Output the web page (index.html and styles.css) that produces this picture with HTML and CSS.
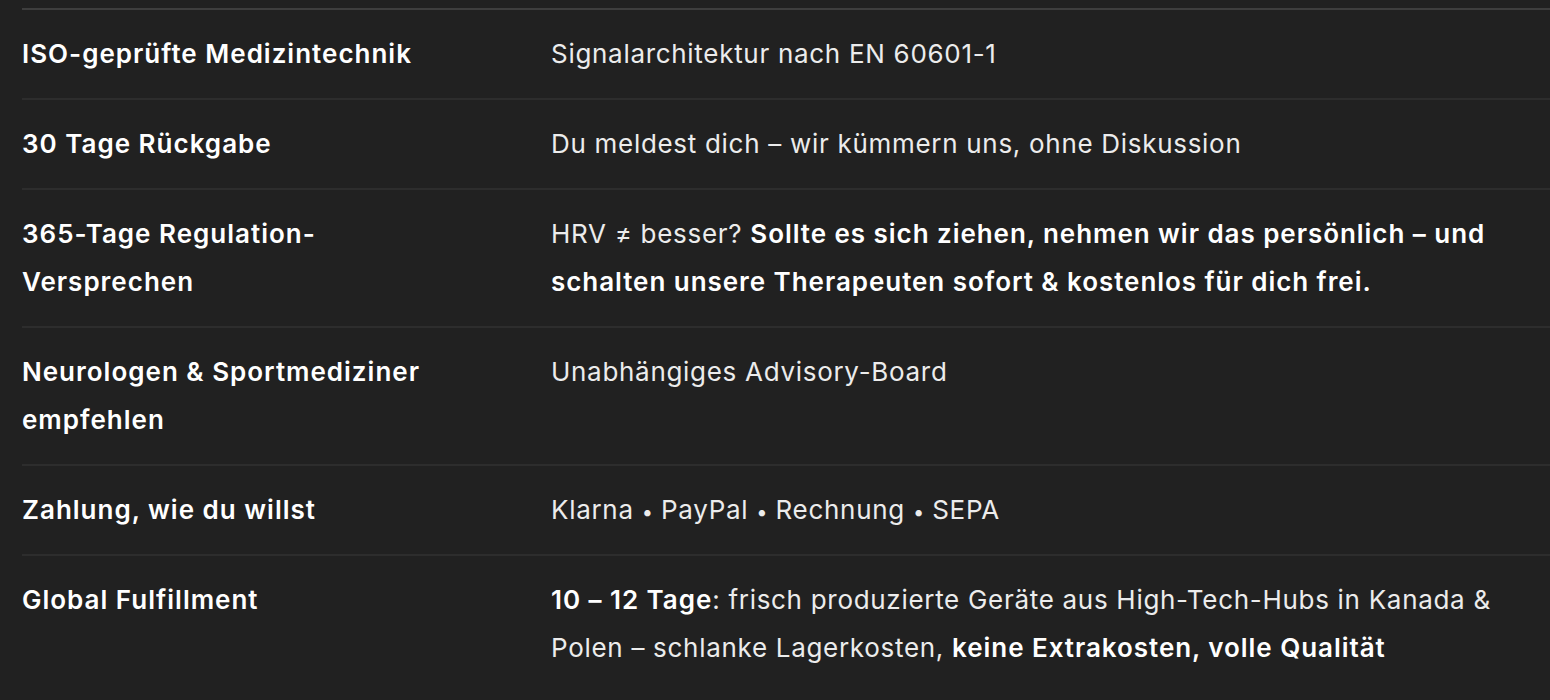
FILE: index.html
```html
<!DOCTYPE html>
<html lang="de">
<head>
<meta charset="utf-8">
<title>Vorteile</title>
<link rel="stylesheet" href="styles.css">
</head>
<body>
<div class="wrap">
<table class="spec">
<tbody>
<tr><th>ISO-geprüfte Medizintechnik</th><td>Signalarchitektur nach EN 60601-1</td></tr>
<tr><th>30 Tage Rückgabe</th><td>Du meldest dich – wir kümmern uns, ohne Diskussion</td></tr>
<tr><th>365-Tage Regulation-Versprechen</th><td>HRV ≠ besser? <strong>Sollte es sich ziehen, nehmen wir das persönlich – und schalten unsere Therapeuten sofort &amp; kostenlos für dich frei.</strong></td></tr>
<tr><th>Neurologen &amp; Sportmediziner empfehlen</th><td>Unabhängiges Advisory-Board</td></tr>
<tr><th>Zahlung, wie du willst</th><td>Klarna <span class="sep">•</span> PayPal <span class="sep">•</span> Rechnung <span class="sep">•</span> SEPA</td></tr>
<tr><th>Global Fulfillment</th><td><strong>10 – 12 Tage</strong>: frisch produzierte Geräte aus High-Tech-Hubs in Kanada &amp; Polen – schlanke Lagerkosten, <strong>keine Extrakosten, volle Qualität</strong></td></tr>
</tbody>
</table>
</div>
</body>
</html>
```

FILE: styles.css
```css
html, body {
  margin: 0;
  padding: 0;
  background: #212121;
}
body {
  font-family: Inter, "Noto Sans", "Liberation Sans", sans-serif;
  color: #ececec;
  font-size: 26px;
  line-height: 48px;
  letter-spacing: 0.7px;
}
.wrap {
  padding: 8px 0 0 22px;
}
.spec {
  width: 100%;
  border-collapse: collapse;
  border-top: 2px solid #3e3e3e;
}
.spec tr {
  border-bottom: 2px solid #2d2d2d;
}
.spec tr:last-child {
  border-bottom: none;
}
.spec th, .spec td {
  padding: 20px 0;
  vertical-align: top;
  text-align: left;
}
.spec th {
  width: 529px;
  padding-right: 95px;
  box-sizing: border-box;
  font-weight: 600;
  letter-spacing: 1px;
  color: #ffffff;
}
.spec td {
  font-weight: 400;
  padding-right: 30px;
}
.spec strong {
  font-weight: 600;
  letter-spacing: 0.95px;
  color: #ffffff;
}
.spec .sep {
  font-size: 20px;
  line-height: 0;
  letter-spacing: 0;
}
```
